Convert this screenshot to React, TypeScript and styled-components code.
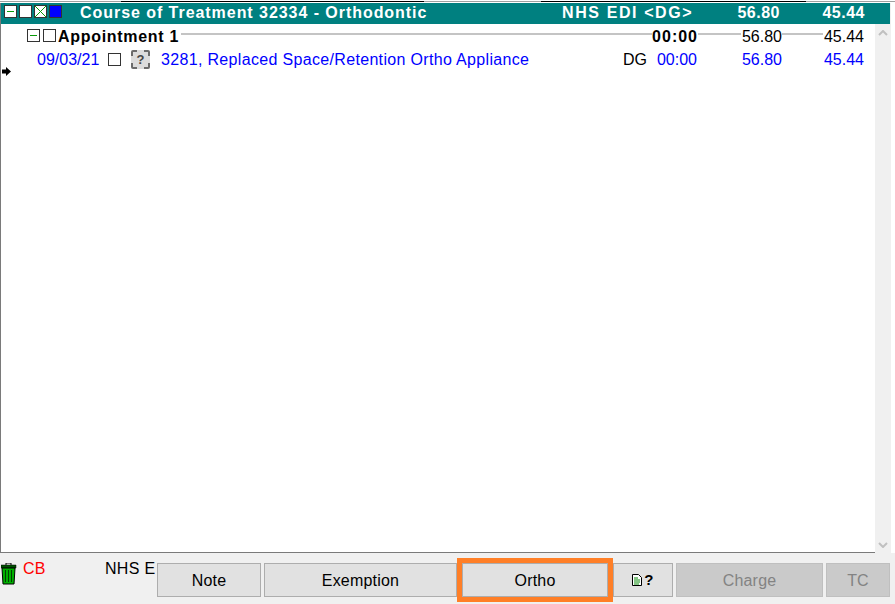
import React from 'react';
import styled, { createGlobalStyle } from 'styled-components';

const GlobalStyle = createGlobalStyle`
  html, body {
    margin: 0;
    padding: 0;
    background: #f0f0f0;
  }
  body {
    font-family: "Liberation Sans", Arial, sans-serif;
    font-size: 16px;
    color: #000;
  }
`;

const Page = styled.div`
  width: 895px;
  height: 604px;
  display: flex;
  flex-direction: column;
  overflow: hidden;
`;

const TopStrip = styled.div`
  height: 3px;
  background: #fff;
  display: flex;
`;

const TabEdge = styled.span<{ $width: number; $dark?: boolean }>`
  width: ${(p) => p.$width}px;
  height: 2px;
  flex: none;
  box-sizing: border-box;
  border-bottom: 1px solid ${(p) => (p.$dark ? '#000' : '#a0a0a0')};
`;

const Main = styled.div`
  height: 550px;
  display: flex;
  background: #fff;
`;

const ListPanel = styled.div`
  width: 875px;
  box-sizing: border-box;
  background: #fff;
  border-left: 1px solid #7a7a7a;
  border-bottom: 1px solid #7a7a7a;
`;

const Scrollbar = styled.div`
  width: 16px;
  display: flex;
  flex-direction: column;
  justify-content: space-between;
  align-items: center;
  padding: 27px 0 5px;
  box-sizing: border-box;
  background: #f0f0f0;
`;

const CourseRow = styled.div`
  width: 889px;
  height: 21px;
  box-sizing: border-box;
  padding-bottom: 2px;
  background: #008080;
  color: #fff;
  display: grid;
  grid-template-columns: 79px 482px 135px 83px 85px;
  align-items: center;
  font-weight: 700;
  position: relative;
  z-index: 1;
`;

const Boxes = styled.div`
  display: flex;
  gap: 2px;
  padding-left: 3px;
  margin-bottom: 2px;
  align-items: center;
`;

const Box = styled.span<{ $fill?: string }>`
  width: 13px;
  height: 13px;
  box-sizing: border-box;
  border: 1px solid #333;
  background: ${(p) => p.$fill ?? '#fff'};
  display: block;
  flex: none;
`;

const BoxIcon = styled.svg`
  display: block;
  width: 11px;
  height: 11px;
`;

const CourseTitle = styled.span`
  letter-spacing: 0.95px;
  white-space: nowrap;
`;

const CourseCharge = styled.span`
  letter-spacing: 1.6px;
  white-space: nowrap;
`;

const Amount = styled.span`
  text-align: right;
  letter-spacing: 0.5px;
`;

const AppointmentRow = styled.div`
  height: 25px;
  display: grid;
  grid-template-columns: 152px 1fr;
  align-items: center;
  padding-left: 26px;
`;

const AppointmentHead = styled.div`
  display: flex;
  align-items: center;
  gap: 3px;

  ${Box} {
    margin-bottom: 2px;
  }
`;

const AppointmentName = styled.span`
  font-weight: 700;
  letter-spacing: 0.7px;
  white-space: nowrap;
  margin-left: -1px;
`;

const Totals = styled.div`
  display: grid;
  grid-template-columns: 519px 84px 82px;
  align-items: center;
`;

const Ruled = styled.span<{ $bold?: boolean }>`
  display: flex;
  align-items: center;
  justify-content: flex-end;
  font-weight: ${(p) => (p.$bold ? 700 : 400)};
  letter-spacing: ${(p) => (p.$bold ? '1px' : '0')};

  &::before {
    content: '';
    flex: 1;
    height: 2px;
    background: #c4c4c4;
    margin: 0 ${(p) => (p.$bold ? '0' : '1px')} 6px ${(p) => (p.$bold ? '2px' : '0')};
  }
`;

const ItemRow = styled.div`
  height: 21px;
  display: grid;
  grid-template-columns: 71px 23px 30px 462px 33px 41px 85px 82px;
  align-items: center;
  padding-left: 36px;
  color: #0000ff;
`;

const CheckCell = styled.span`
  display: flex;
`;

const HelpIcon = styled.span`
  width: 19px;
  height: 19px;
  box-sizing: border-box;
  border: 2px dashed #6b6b6b;
  border-radius: 2px;
  background: #dcdcdc;
  color: #444;
  font-size: 13px;
  font-weight: 700;
  display: flex;
  align-items: center;
  justify-content: center;
`;

const Description = styled.span`
  letter-spacing: 0.33px;
  white-space: nowrap;
`;

const Numeric = styled.span`
  text-align: right;
`;

const CodeCell = styled.span`
  color: #000;
  white-space: nowrap;
`;

const Marker = styled.svg`
  display: block;
  width: 9px;
  height: 9px;
  margin: -3px 0 0 1px;
`;

const Chevron = styled.svg`
  display: block;
  width: 10px;
  height: 6px;
`;

const Footer = styled.div`
  flex: 1;
  display: flex;
  gap: 3px;
  padding-top: 10px;
  box-sizing: border-box;
`;

const Status = styled.div`
  width: 154px;
  height: 30px;
  flex: none;
  display: flex;
  margin-top: -3px;
  white-space: nowrap;
`;

const Bin = styled.svg`
  display: block;
  width: 16px;
  height: 22px;
  margin: 3px 0 0 1px;
  flex: none;
`;

const StatusCode = styled.span`
  color: #ff0000;
  margin-left: 6px;
  width: 82px;
  flex: none;
  letter-spacing: 0.3px;
`;

const StatusScheme = styled.span`
  letter-spacing: 0.3px;
`;

const FooterButton = styled.button<{ $width: number; $highlight?: boolean }>`
  width: ${(p) => p.$width}px;
  height: 34px;
  flex: none;
  box-sizing: border-box;
  padding: 1px 0 0;
  background: ${(p) => (p.disabled ? '#cacaca' : '#e1e1e1')};
  color: ${(p) => (p.disabled ? '#838383' : '#000')};
  border: 1px solid ${(p) => (p.disabled ? '#bfbfbf' : '#adadad')};
  font-family: inherit;
  font-size: 16px;
  letter-spacing: 0.2px;
  display: flex;
  align-items: center;
  justify-content: center;
  outline: ${(p) => (p.$highlight ? '5px solid #ff7f27' : 'none')};
  margin-left: ${(p) => (p.$highlight ? '2px' : '0')};
  margin-right: ${(p) => (p.$highlight ? '2px' : '0')};
`;

const DocIcon = styled.svg`
  display: block;
  width: 10px;
  height: 12px;
  margin-top: -2px;
`;

const Question = styled.span`
  font-size: 15px;
  font-weight: 700;
  margin: -2px 0 0 2px;
`;

export default function App() {
  return (
    <Page>
      <GlobalStyle />
      <TopStrip>
        <TabEdge $width={121} />
        <TabEdge $width={303} $dark />
        <TabEdge $width={117} />
        <TabEdge $width={265} $dark />
        <TabEdge $width={89} />
      </TopStrip>
      <Main>
        <ListPanel>
          <CourseRow>
            <Boxes>
              <Box>
                <BoxIcon viewBox="0 0 11 11">
                  <path d="M2 5.5h7" stroke="#0a9a0a" strokeWidth="1" />
                </BoxIcon>
              </Box>
              <Box />
              <Box>
                <BoxIcon viewBox="0 0 11 11">
                  <path d="M0 0l11 11M11 0L0 11" stroke="#0a9a0a" strokeWidth="1" />
                </BoxIcon>
              </Box>
              <Box $fill="#0000ff" />
            </Boxes>
            <CourseTitle>Course of Treatment 32334 - Orthodontic</CourseTitle>
            <CourseCharge>NHS EDI &lt;DG&gt;</CourseCharge>
            <Amount>56.80</Amount>
            <Amount>45.44</Amount>
          </CourseRow>
          <AppointmentRow>
            <AppointmentHead>
              <Box>
                <BoxIcon viewBox="0 0 11 11">
                  <path d="M2 5.5h7" stroke="#0a9a0a" strokeWidth="1" />
                </BoxIcon>
              </Box>
              <Box />
              <AppointmentName>Appointment 1</AppointmentName>
            </AppointmentHead>
            <Totals>
              <Ruled $bold>00:00</Ruled>
              <Ruled>56.80</Ruled>
              <Ruled>45.44</Ruled>
            </Totals>
          </AppointmentRow>
          <ItemRow>
            <span>09/03/21</span>
            <CheckCell>
              <Box />
            </CheckCell>
            <HelpIcon>?</HelpIcon>
            <Description>3281, Replaced Space/Retention Ortho Appliance</Description>
            <CodeCell>DG</CodeCell>
            <Numeric>00:00</Numeric>
            <Numeric>56.80</Numeric>
            <Numeric>45.44</Numeric>
          </ItemRow>
          <Marker viewBox="0 0 9 9">
            <path d="M0 2.5h4V0l5 4.5L4 9V6.5H0z" fill="#000" />
          </Marker>
        </ListPanel>
        <Scrollbar>
          <Chevron viewBox="0 0 10 6">
            <path d="M1 5l4-4 4 4" fill="none" stroke="#c0c0c0" strokeWidth="2" />
          </Chevron>
          <Chevron viewBox="0 0 10 6">
            <path d="M1 1l4 4 4-4" fill="none" stroke="#c0c0c0" strokeWidth="2" />
          </Chevron>
        </Scrollbar>
      </Main>
      <Footer>
        <Status>
          <Bin viewBox="0 0 16 22">
            <path d="M5 2V0h5v2" fill="none" stroke="#000" strokeWidth="1" />
            <path d="M0 2h15v3H0z" fill="#005000" stroke="#000" strokeWidth="0.5" />
            <path d="M1 5h13l-1 16H2z" fill="#00b000" stroke="#000" strokeWidth="1" />
            <path d="M4.5 7v12M7.5 7v12M10.5 7v12" stroke="#004000" strokeWidth="1" />
          </Bin>
          <StatusCode>CB</StatusCode>
          <StatusScheme>NHS E</StatusScheme>
        </Status>
        <FooterButton $width={104}>Note</FooterButton>
        <FooterButton $width={193}>Exemption</FooterButton>
        <FooterButton $width={146} $highlight>
          Ortho
        </FooterButton>
        <FooterButton $width={60}>
          <DocIcon viewBox="0 0 10 12">
            <path d="M0.5 0.5h6l3 3v8h-9z" fill="#fff" stroke="#000" />
            <path d="M2 4h4M2 6h6M2 8h6M2 10h5" stroke="#0a8a0a" strokeWidth="1" />
          </DocIcon>
          <Question>?</Question>
        </FooterButton>
        <FooterButton $width={147} disabled>
          Charge
        </FooterButton>
        <FooterButton $width={64} disabled>
          TC
        </FooterButton>
      </Footer>
    </Page>
  );
}
